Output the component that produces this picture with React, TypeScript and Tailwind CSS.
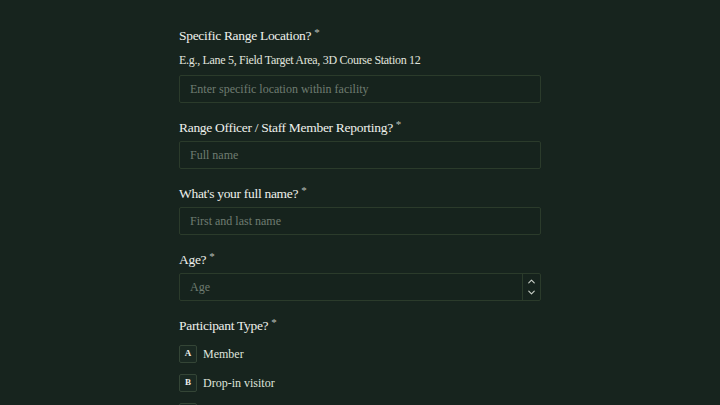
import { ChevronUp, ChevronDown } from "lucide-react"

const serif = { fontFamily: '"Liberation Serif", "DejaVu Serif", serif' }

function Label({ text }: { text: string }) {
  return (
    <div className="flex items-start text-[13.5px] leading-[20px] tracking-[-0.3px] text-[#eef0ec]">
      <span>{text}</span>
      <span className="ml-[3px] -mt-[4px] text-[11px] text-[#b9c0b8]">*</span>
    </div>
  )
}

function TextInput({ placeholder }: { placeholder: string }) {
  return (
    <div className="flex h-[28px] items-center rounded-[2px] border border-[#2b3b2b] bg-[#16231d] px-[10px] text-[12px] text-[#6f7c71]">
      {placeholder}
    </div>
  )
}

const options = [
  { key: "A", label: "Member" },
  { key: "B", label: "Drop-in visitor" },
]

export default function App() {
  return (
    <div style={serif} className="h-[405px] w-[720px] overflow-hidden bg-[#17241e]">
      <div className="mx-auto flex w-[362px] flex-col pt-[26px]">
        <Label text="Specific Range Location?" />
        <div className="mt-1 text-[12px] leading-[20px] tracking-[-0.3px] text-[#e1e4de]">
          E.g., Lane 5, Field Target Area, 3D Course Station 12
        </div>
        <div className="mt-[5px]">
          <TextInput placeholder="Enter specific location within facility" />
        </div>

        <div className="mt-[15px]">
          <Label text="Range Officer / Staff Member Reporting?" />
        </div>
        <div className="mt-[3px]">
          <TextInput placeholder="Full name" />
        </div>

        <div className="mt-[15px]">
          <Label text="What's your full name?" />
        </div>
        <div className="mt-[3px]">
          <TextInput placeholder="First and last name" />
        </div>

        <div className="mt-[15px]">
          <Label text="Age?" />
        </div>
        <div className="mt-[3px] flex h-[28px] items-stretch rounded-[2px] border border-[#2b3b2b] bg-[#16231d]">
          <div className="flex flex-1 items-center px-[10px] text-[12px] text-[#6f7c71]">Age</div>
          <div className="flex w-[18px] flex-col items-center justify-center border-l border-[#2b3b2b] text-[#c9cfc7]">
            <ChevronUp size={11} strokeWidth={2.5} />
            <ChevronDown size={11} strokeWidth={2.5} />
          </div>
        </div>

        <div className="mt-[15px]">
          <Label text="Participant Type?" />
        </div>
        <div className="mt-[9px] flex flex-col gap-[11px]">
          {options.map((o) => (
            <div key={o.key} className="flex items-center gap-[6px]">
              <div className="flex h-[18px] w-[18px] items-center justify-center rounded-[2px] border border-[#344536] bg-[#1a2922] text-[9px] font-bold text-[#eef0ec]">
                {o.key}
              </div>
              <span className="text-[12px] text-[#dfe3dc]">{o.label}</span>
            </div>
          ))}
          <div className="h-[18px] w-[18px] rounded-[2px] border border-[#344536] bg-[#1a2922]" />
        </div>
      </div>
    </div>
  )
}
